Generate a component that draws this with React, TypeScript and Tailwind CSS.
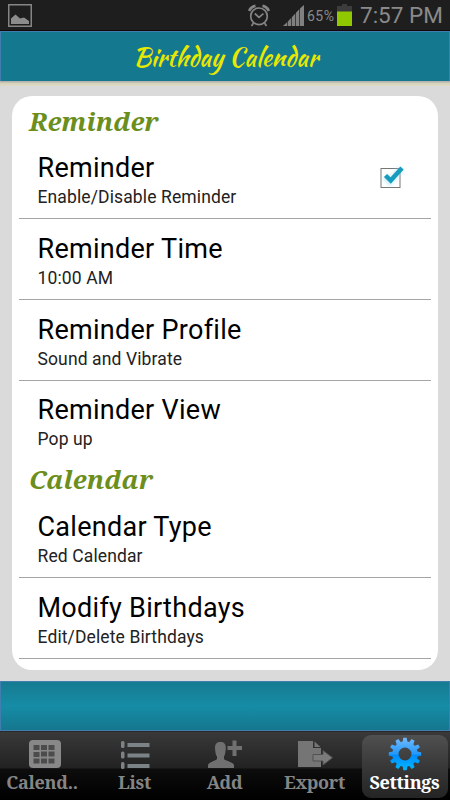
import React from 'react';

const serif = "font-['Droid_Serif','Noto_Serif','DejaVu_Serif_Condensed','DejaVu_Serif',serif]";

function StatusBar() {
  return (
    <div className="flex h-[31px] items-start border-b border-[#120808] bg-[#1e1e1e] pl-2 font-['Roboto',sans-serif] text-[#8a8a8a]">
      <svg className="mt-1 h-[23px] w-6" viewBox="0 0 24 23">
        <rect x="0.75" y="0.75" width="22.5" height="21.5" fill="none" stroke="#858585" strokeWidth="1.5" />
        <path d="M3 20V14.500L7.500 10.500L12 14.500L16 13.500L21 17V20Z" fill="#8c8c8c" />
      </svg>
      <svg className="ml-[216px] mt-[4px] h-[23px] w-[22px]" viewBox="0 0 22 23" fill="none" stroke="#858585" strokeWidth="1.7">
        <circle cx="11" cy="12.3" r="8.3" />
        <path d="M6.8 9.5L11 13.3L15.4 9.7M5.5 19L3.5 22M16.5 19L18.5 22" />
        <path d="M1.2 7A8 8 0 0 1 7.5 1.8M14.5 1.8A8 8 0 0 1 20.8 7" strokeWidth="2.7" />
      </svg>
      <svg className="ml-[13px] mt-[5px] h-[22px] w-[22px]" viewBox="0 0 22 22">
        <path d="M0 21L21 0V21Z" fill="#3c3c3c" />
        <path d="M0 21L4 17.5V21ZM5 16.5L8 13.2V21H5ZM9 12.2L12 8.8V21H9ZM13 7.7L16 4.5V21H13ZM17 3.5L21 0V21H17Z" fill="#808080" />
      </svg>
      <span className="ml-0.5 mt-[6px] w-[29px] whitespace-nowrap text-[14px] leading-5 tracking-[0.5px]">65%</span>
      <svg className="ml-[1px] mt-1 h-[23px] w-[15px]" viewBox="0 0 15 23">
        <path d="M5 0H10V2H15V8H0V2H5Z" fill="#3c3c3c" />
        <rect y="7.5" width="15" height="14.5" fill="#90c900" />
      </svg>
      <span className="ml-2 mt-[2px] whitespace-nowrap text-[22.5px] leading-[27px]">7:57 PM</span>
    </div>
  );
}

function SectionHeading({ text }: { text: string }) {
  return (
    <h2 className={`${serif} h-[42px] pl-[17px] pt-[9px] text-[26px] font-bold italic leading-8 text-[#6b8e1c]`}>{text}</h2>
  );
}

function Check() {
  return (
    <svg className="mr-[26px] mt-[27px] h-[26px] w-[26px]" viewBox="0 0 26 26">
      <rect x="2" y="3.500" width="19" height="19" fill="#fff" stroke="#777" />
      <path d="M6 11.5L11 16.5L22.5 3.5" fill="none" stroke="#9bdcf0" strokeWidth="7" opacity="0.45" className="blur-[1.5px]" />
      <path d="M6.500 10.500L11.700 15.500L23 3" fill="none" stroke="#159cbf" strokeWidth="4.5" />
    </svg>
  );
}

interface RowProps {
  title: string;
  note: string;
  checked?: boolean;
  last?: boolean;
}

function Row({ title, note, checked, last }: RowProps) {
  return (
    <div className={`mx-[7px] flex justify-between pl-[18px] ${last ? 'h-[73px]' : 'h-[81px] border-b border-[#a5a5a5]'}`}>
      <div className={`whitespace-nowrap pl-[0.5px] font-['Roboto',sans-serif] text-black ${last ? '-mt-px' : ''}`}>
        <div className="pt-[14px] text-[27px] leading-8 tracking-[0.28px]">{title}</div>
        <div className="pt-[2px] text-[17.5px] leading-[22px] tracking-[0.12px] text-[#222]">{note}</div>
      </div>
      {checked && <Check />}
    </div>
  );
}

function CalendarIcon() {
  return (
    <svg className="h-8 w-9" viewBox="0 0 36 32">
      <rect x="2" y="2" width="32" height="28" rx="4" fill="#888" />
      <path d="M6.500 7h6v5h-6zM14 7h6v5h-6zM21.500 7h6v5h-6zM6.500 14h6v5h-6zM14 13.500h6v5h-6zM21.500 13.500h6v5h-6zM6.500 20.500h6v5h-6zM14 20.500h6v5h-6zM21.500 20.500h6v5h-6z" fill="#4c4c4c" />
    </svg>
  );
}

function ListIcon() {
  return (
    <svg className="h-8 w-9" viewBox="0 0 36 32" fill="#7c8386">
      <path d="M10.500 5h22v4h-22zM10.500 15.500h22v4h-22zM10.500 26h22v4h-22z" />
      <rect x="4" y="3" width="3.500" height="7" rx="1.500" />
      <rect x="4" y="13.500" width="3.500" height="7" rx="1.500" />
      <rect x="4" y="24" width="3.500" height="7" rx="1.500" />
    </svg>
  );
}

function AddIcon() {
  return (
    <svg className="h-8 w-9" viewBox="0 0 36 32" fill="#707070">
      <path d="M1 30V27C2 24 8 23 10 21V18.500C8.800 17 8.500 15 8.300 13C7.300 7 9 4 13.500 4C18 4 19.500 7 18.500 13C18.300 15 18 17 17 18.500V21C19 23 26 24 27 27V30Z" />
      <path d="M25.500 2.500h4V8H35v4h-5.500v6h-4v-6h-5V8h5z" />
    </svg>
  );
}

function ExportIcon() {
  return (
    <svg className="h-8 w-9" viewBox="0 0 36 32">
      <path d="M1 3H16V10H24V29H1Z" fill="#757575" />
      <path d="M17.500 3.500L23.500 9H17.500Z" fill="#757575" />
      <path d="M16 16.500H26V12.500L35.500 19.700L26 27V23H16Z" fill="#7b7b7b" stroke="#515151" strokeWidth="1" />
    </svg>
  );
}

function GearIcon() {
  const teeth = Array.from({ length: 12 }, (_, i) => i * 30);
  return (
    <svg className="h-[34px] w-[34px]" viewBox="0 0 34 34">
      <defs>
        <linearGradient id="gear" gradientUnits="userSpaceOnUse" x1="0" y1="1" x2="0" y2="33">
          <stop offset="0" stopColor="#70b9ff" />
          <stop offset="0.5" stopColor="#2498fa" />
          <stop offset="0.54" stopColor="#008cff" />
          <stop offset="1" stopColor="#00b8ff" />
        </linearGradient>
        <mask id="cog">
          <circle cx="17" cy="17" r="12.7" fill="#fff" />
          {teeth.map((a) => (
            <path key={a} d="M14.600 5L15.300 0.800H18.700L19.400 5Z" fill="#fff" transform={`rotate(${a} 17 17)`} />
          ))}
          <circle cx="17" cy="17" r="6.500" fill="#000" />
        </mask>
      </defs>
      <rect width="34" height="34" fill="url(#gear)" mask="url(#cog)" />
    </svg>
  );
}

interface TabProps {
  label: string;
  icon: React.ReactNode;
  active?: boolean;
  clipped?: boolean;
}

function Tab({ label, icon, active, clipped }: TabProps) {
  return (
    <div
      className={`mt-[3px] flex h-[63px] flex-col items-center rounded-[9px] ${
        active ? 'mx-[2px] bg-linear-to-b from-[#505050] via-[#383838] to-[#242424] text-white' : 'text-[#858585]'
      }`}
    >
      <div className="flex h-[37px] items-center">{icon}</div>
      <span
        className={`${serif} -mt-px whitespace-nowrap text-[18px] font-bold leading-[22px] tracking-[-0.3px] ${
          clipped ? 'pr-[6px]' : 'pr-px'
        }`}
      >
        {label}
      </span>
    </div>
  );
}

export default function App() {
  return (
    <div className="flex h-[800px] w-[450px] flex-col overflow-hidden bg-[#dadada]">
      <StatusBar />
      <header className="flex h-[50px] items-center justify-center border-x border-t border-[#3f7eaf] bg-[#14788f]">
        <h1 className="whitespace-nowrap pl-px font-['Kaushan_Script',cursive] text-[25px] font-normal leading-8 text-[#e8e800]">
          Birthday Calendar
        </h1>
      </header>
      <div className="h-[5px] bg-linear-to-b from-[#aaa] via-[#d7d3bd] to-[#dedbc4]" />
      <main className="h-[595px] px-3 pt-[10px]">
        <section className="h-[574px] rounded-[20px] bg-white">
          <SectionHeading text="Reminder" />
          <Row title="Reminder" note="Enable/Disable Reminder" checked />
          <Row title="Reminder Time" note="10:00 AM" />
          <Row title="Reminder Profile" note="Sound and Vibrate" />
          <Row title="Reminder View" note="Pop up" last />
          <SectionHeading text="Calendar" />
          <div className="pt-px">
            <Row title="Calendar Type" note="Red Calendar" />
            <Row title="Modify Birthdays" note="Edit/Delete Birthdays" />
          </div>
        </section>
      </main>
      <div className="h-[50px] border border-[#3f7eaf] bg-linear-to-b from-[#167b91] via-[#168ca6] to-[#15778e]" />
      <nav className="grid h-[69px] grid-cols-5 border-t border-[#292929] bg-[linear-gradient(#393939_0px,#222_36px,#0d0d0d_37px,#000_67px)]">
        <Tab label="Calend.." icon={<CalendarIcon />} clipped />
        <Tab label="List" icon={<ListIcon />} />
        <Tab label="Add" icon={<AddIcon />} />
        <Tab label="Export" icon={<ExportIcon />} />
        <Tab label="Settings" icon={<GearIcon />} active />
      </nav>
    </div>
  );
}
